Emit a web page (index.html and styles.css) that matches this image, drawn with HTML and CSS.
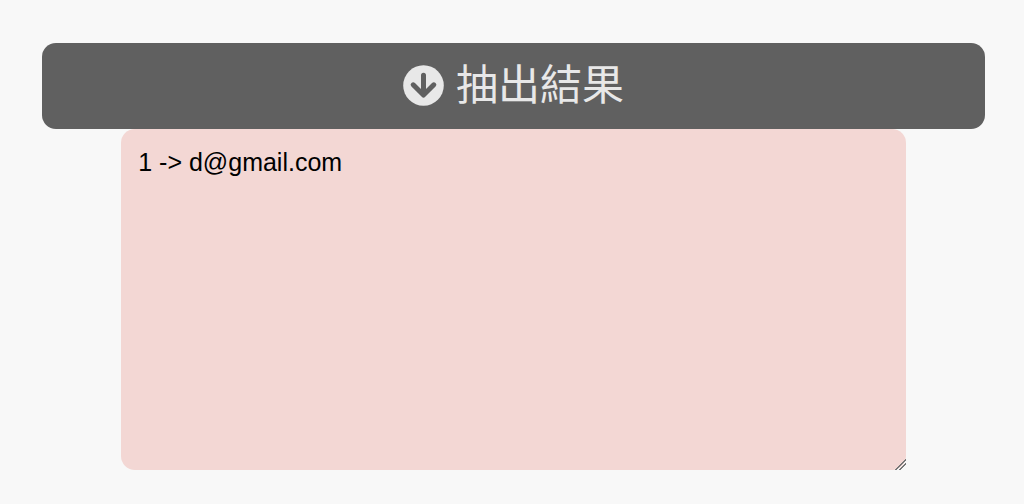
FILE: index.html
```html
<!DOCTYPE html>
<html lang="zh-Hant">

<head>
    <meta charset="UTF-8" />
    <meta name="viewport" content="width=device-width, initial-scale=1" />
    <title>抽出結果</title>
    <link rel="stylesheet" href="styles.css">
</head>

<body>

    <main class="container">
        <!-- Draw button -->
        <button type="button" class="draw-btn">
            <svg class="draw-icon" viewBox="0 0 41 41" aria-hidden="true">
                <circle cx="20.5" cy="19.5" r="20.3" />
                <path d="M20.5 9.2v19M10.2 18.8l10.3 10.3 10.3-10.3" />
            </svg>
            <span id="resultLabel">抽出結果</span>
        </button>

        <!-- Result -->
        <textarea class="result-box" aria-labelledby="resultLabel">1 -&gt; d@gmail.com</textarea>
    </main>

</body>

</html>
```
FILE: styles.css
```css
* {
    margin: 0;
    padding: 0;
    box-sizing: border-box;
}

body {
    background-color: #f8f8f8;
    font-family: "Liberation Sans", "Noto Sans CJK TC", sans-serif;
}

.container {
    display: flex;
    flex-direction: column;
    align-items: center;
    padding: 43px 39px 34px 42px;
}

/* Draw button */
.draw-btn {
    display: flex;
    justify-content: center;
    align-items: center;
    gap: 12px;
    width: 100%;
    padding: 12px;
    background-color: #606060;
    color: #e8e8e8;
    border: none;
    border-radius: 14px;
    font-family: inherit;
    font-size: 42px;
    line-height: 62px;
    cursor: pointer;
}

.draw-icon {
    width: 41px;
    height: 41px;
    fill: #e8e8e8;
    overflow: visible;
}

.draw-icon path {
    fill: none;
    stroke: #606060;
    stroke-width: 5;
    stroke-linecap: round;
    stroke-linejoin: round;
}

/* Result */
.result-box {
    width: 83.2%;
    height: 341px;
    padding: 18px 17px;
    background-color: #f3d7d4;
    color: #000;
    border: none;
    border-radius: 14px;
    font-family: inherit;
    font-size: 25px;
    line-height: 30px;
    outline: none;
}

.result-box::-webkit-resizer {
    background: linear-gradient(-45deg, transparent 4px, #777 4px, #777 5px, transparent 5px, transparent 7px, #777 7px, #777 8px, transparent 8px);
}
```
